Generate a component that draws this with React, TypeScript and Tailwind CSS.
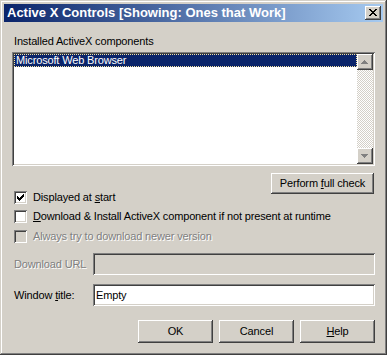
import React from "react";

const raised =
  "shadow-[inset_-1px_-1px_#404040,inset_1px_1px_#ffffff,inset_-2px_-2px_#808080,inset_2px_2px_#d4d0c8]";
const sunken =
  "shadow-[inset_1px_1px_#808080,inset_-1px_-1px_#ffffff,inset_2px_2px_#404040,inset_-2px_-2px_#d4d0c8]";

function Check() {
  return (
    <svg width="13" height="13" viewBox="0 0 13 13" shapeRendering="crispEdges" className="block">
      <path
        fill="#000"
        d="M9 3h1v1h-1zM8 4h2v1h-2zM3 5h1v1h-1zM7 5h3v1h-3zM3 6h2v1h-2zM6 6h3v1h-3zM3 7h5v1h-5zM4 8h3v1h-3zM5 9h1v1h-1z"
      />
    </svg>
  );
}

function Checkbox({ checked, disabled }: { checked?: boolean; disabled?: boolean }) {
  return (
    <div className={`w-[13px] h-[13px] shrink-0 ${sunken} ${disabled ? "bg-[#d4d0c8]" : "bg-white"}`}>
      {checked && <Check />}
    </div>
  );
}

function ArrowBtn({ up }: { up?: boolean }) {
  return (
    <div className={`w-[16px] h-[16px] bg-[#d4d0c8] ${raised}`}>
      <svg width="16" height="16" viewBox="0 0 16 16" shapeRendering="crispEdges" className="block">
        {up ? (
          <path fill="#808080" d="M7 6h1v1h-1zM6 7h3v1h-3zM5 8h5v1h-5zM4 9h7v1h-7z" />
        ) : (
          <path fill="#808080" d="M4 6h7v1h-7zM5 7h5v1h-5zM6 8h3v1h-3zM7 9h1v1h-1z" />
        )}
      </svg>
    </div>
  );
}

function Btn({ children, w = "w-[75px]", h = "h-[23px]" }: { children: React.ReactNode; w?: string; h?: string }) {
  return (
    <div className={`${w} ${h} bg-[#d4d0c8] ${raised} flex items-center justify-center text-black`}>
      {children}
    </div>
  );
}

export default function App() {
  return (
    <div
      className="w-[387px] h-[355px] bg-[#d4d0c8] p-[4px] shadow-[inset_-1px_-1px_#404040,inset_1px_1px_#d4d0c8,inset_-2px_-2px_#808080,inset_2px_2px_#ffffff] text-[11px] leading-[13px] tracking-[-0.15px] text-black flex flex-col"
      style={{ fontFamily: '"Liberation Sans", Arial, sans-serif' }}
    >
      {/* Title bar */}
      <div className="h-[18px] flex items-center justify-between bg-[linear-gradient(to_right,#0a246a,#a6caf0)] pl-[3px] pr-[2px]">
        <span className="text-white font-bold text-[13px] leading-[18px] tracking-normal whitespace-nowrap">
          Active X Controls [Showing: Ones that Work]
        </span>
        <div className={`w-[16px] h-[14px] bg-[#d4d0c8] ${raised}`}>
          <svg width="16" height="14" viewBox="0 0 16 14" shapeRendering="crispEdges" className="block">
            <path
              fill="#000"
              d="M4 3h2v1h-2zM10 3h2v1h-2zM5 4h2v1h-2zM9 4h2v1h-2zM6 5h4v1h-4zM7 6h2v1h-2zM6 7h4v1h-4zM5 8h2v1h-2zM9 8h2v1h-2zM4 9h2v1h-2zM10 9h2v1h-2z"
            />
          </svg>
        </div>
      </div>

      {/* Body */}
      <div className="flex flex-col px-[8px]">
        <div className="mt-[13px] pl-[2px] whitespace-nowrap">Installed ActiveX components</div>

        {/* Listbox */}
        <div className={`mt-[4px] h-[114px] bg-white ${sunken} p-[2px] flex`}>
          <div className="flex-1">
            <div className="h-[13px] bg-[#0a246a] text-white pl-[2px] outline-1 outline-dotted outline-[#f5e3a0] -outline-offset-1 whitespace-nowrap">
              Microsoft Web Browser
            </div>
          </div>
          <div className="w-[16px] flex flex-col">
            <ArrowBtn up />
            <div className="flex-1 bg-[repeating-conic-gradient(#d4d0c8_0_25%,#ffffff_0_50%)] bg-[length:2px_2px]" />
            <ArrowBtn />
          </div>
        </div>

        {/* Perform full check */}
        <div className="mt-[7px] flex justify-end pr-[1px]">
          <Btn w="w-[103px]" h="h-[21px]">
            <span>
              Perform <span className="underline">f</span>ull check
            </span>
          </Btn>
        </div>

        {/* Checkboxes */}
        <div className="mt-[-3px] pl-[2px] flex items-center gap-[6px] h-[13px]">
          <Checkbox checked />
          <span className="whitespace-nowrap">
            Displayed at <span className="underline">s</span>tart
          </span>
        </div>
        <div className="mt-[6px] pl-[2px] flex items-center gap-[6px] h-[13px]">
          <Checkbox />
          <span className="whitespace-nowrap">
            <span className="underline">D</span>ownload &amp; Install ActiveX component if not present at runtime
          </span>
        </div>
        <div className="mt-[7px] pl-[2px] flex items-center gap-[6px] h-[13px]">
          <Checkbox disabled />
          <span className="whitespace-nowrap text-[#808080] [text-shadow:1px_1px_0_#ffffff]">
            Always try to download newer version
          </span>
        </div>

        {/* Download URL */}
        <div className="mt-[10px] flex items-center h-[22px]">
          <div className="w-[81px] pl-[2px] whitespace-nowrap text-[#808080] [text-shadow:1px_1px_0_#ffffff]">
            Download URL
          </div>
          <div className={`flex-1 h-[22px] bg-[#d4d0c8] ${sunken}`} />
        </div>

        {/* Window title */}
        <div className="mt-[9px] flex items-center h-[22px]">
          <div className="w-[81px] pl-[2px] whitespace-nowrap">
            Window <span className="underline">t</span>itle:
          </div>
          <div className={`flex-1 h-[22px] bg-white ${sunken} flex items-center pl-[3px]`}>Empty</div>
        </div>

        {/* Buttons */}
        <div className="mt-[14px] flex justify-end gap-[6px]">
          <Btn>OK</Btn>
          <Btn>Cancel</Btn>
          <Btn>
            <span>
              <span className="underline">H</span>elp
            </span>
          </Btn>
        </div>
      </div>
    </div>
  );
}
